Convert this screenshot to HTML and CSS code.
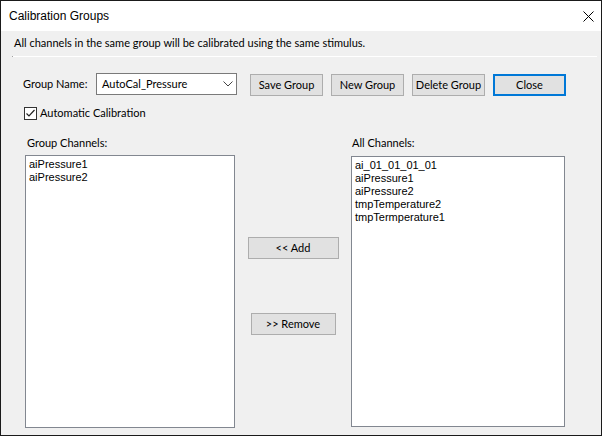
FILE: index.html
```html
<!DOCTYPE html>
<html>
<head>
<meta charset="utf-8">
<title>Calibration Groups</title>
<link rel="stylesheet" href="styles.css">
</head>
<body>
<div class="window">
  <div class="titlebar">
    <span class="title">Calibration Groups</span>
    <svg class="close-x" width="11" height="11" viewBox="0 0 11 11"><path d="M0.5 0.5 L10.5 10.5 M10.5 0.5 L0.5 10.5" stroke="#000" stroke-width="1" fill="none"/></svg>
  </div>
  <div class="content">
    <div class="desc">All channels in the same group will be calibrated using the same stimulus.</div>
    <div class="sep"></div>
    <div class="row1">
      <span class="lbl-name">Group Name:</span>
      <div class="combo">
        <span>AutoCal_Pressure</span>
        <svg class="chev" width="10" height="6" viewBox="0 0 10 6"><path d="M0.5 0.5 L5 5 L9.5 0.5" stroke="#444" stroke-width="1" fill="none"/></svg>
      </div>
      <div class="btns">
        <div class="btn">Save Group</div>
        <div class="btn">New Group</div>
        <div class="btn">Delete Group</div>
        <div class="btn btn-default">Close</div>
      </div>
    </div>
    <div class="row-check">
      <svg class="cb" width="13" height="13" viewBox="0 0 13 13"><rect x="0.5" y="0.5" width="12" height="12" fill="#fff" stroke="#333"/><path d="M2.5 6.5 L5 9 L10.5 3" stroke="#222" stroke-width="1.2" fill="none"/></svg>
      <span class="cb-label">Automatic Calibration</span>
    </div>
    <div class="lists">
      <div class="col-left">
        <div class="col-label">Group Channels:</div>
        <div class="listbox lb-left">
          <div>aiPressure1</div>
          <div>aiPressure2</div>
        </div>
      </div>
      <div class="col-mid">
        <div class="btn btn-add">&lt;&lt; Add</div>
        <div class="btn btn-remove">&gt;&gt; Remove</div>
      </div>
      <div class="col-right">
        <div class="col-label">All Channels:</div>
        <div class="listbox lb-right">
          <div>ai_01_01_01_01</div>
          <div>aiPressure1</div>
          <div>aiPressure2</div>
          <div>tmpTemperature2</div>
          <div>tmpTermperature1</div>
        </div>
      </div>
    </div>
  </div>
</div>
</body>
</html>
```
FILE: styles.css
```css
html, body {
  margin: 0;
  padding: 0;
  background: #ffffff;
}
body {
  font-family: Lato, "Liberation Sans", Arial, sans-serif;
  font-size: 11px;
  color: #000;
}
.window {
  width: 602px;
  height: 436px;
  box-sizing: border-box;
  border: 1px solid #1a1a1a;
  display: flex;
  flex-direction: column;
  overflow: hidden;
}
.titlebar {
  height: 30px;
  flex: 0 0 30px;
  background: #fff;
  display: flex;
  align-items: center;
  justify-content: space-between;
  padding: 0 7px 0 8px;
}
.title {
  font-family: "Liberation Sans", Arial, sans-serif;
  font-size: 12px;
  line-height: 15px;
  padding-top: 1px;
}
.close-x {
  display: block;
  margin-top: 1px;
}
.content {
  flex: 1;
  background: #f0f0f0;
  display: flex;
  flex-direction: column;
}
.desc {
  margin-top: 4px;
  padding-left: 13px;
  line-height: 15px;
  height: 16px;
  white-space: nowrap;
}
.sep {
  margin: 5px 4px 0 11px;
  height: 1px;
  background: #ffffff;
  border-left: 1px solid #a0a0a0;
}
.row1 {
  margin-top: 16px;
  display: flex;
  align-items: flex-start;
  height: 23px;
}
.lbl-name {
  margin-left: 22px;
  width: 73px;
  line-height: 15px;
  margin-top: 3px;
  white-space: nowrap;
}
.combo {
  width: 141px;
  height: 22px;
  box-sizing: border-box;
  border: 1px solid #7a7a7a;
  background: #fff;
  display: flex;
  align-items: center;
  justify-content: space-between;
  padding: 0 3px 1px 5px;
}
.chev {
  display: block;
  margin-top: 1px;
}
.btns {
  display: flex;
  gap: 8px;
  margin-left: 13px;
  margin-top: 1px;
}
.btn {
  height: 22px;
  box-sizing: border-box;
  border: 1px solid #adadad;
  background: #e1e1e1;
  display: flex;
  align-items: center;
  justify-content: center;
  width: 73px;
  line-height: 15px;
  padding-bottom: 2px;
  white-space: nowrap;
}
.btn-default {
  border: 2px solid #0078d7;
  padding-bottom: 1px;
}
.row-check {
  margin-top: 11px;
  display: flex;
  align-items: center;
  height: 13px;
  padding-left: 23px;
}
.cb {
  display: block;
}
.cb-label {
  margin-left: 3px;
  line-height: 15px;
  padding-bottom: 2px;
}
.lists {
  margin-top: 16px;
  display: flex;
  align-items: flex-start;
  padding-left: 24px;
}
.col-label {
  line-height: 13px;
  height: 15px;
  padding-left: 2px;
}
.col-left {
  width: 210px;
}
.listbox {
  box-sizing: border-box;
  border: 1px solid #828790;
  background: #fff;
  font-family: "Liberation Sans", Arial, sans-serif;
  font-size: 11px;
  line-height: 13px;
  padding: 2px 3px;
}
.lb-left {
  margin-top: 4px;
  width: 210px;
  height: 273px;
}
.col-mid {
  width: 116px;
  display: flex;
  flex-direction: column;
  align-items: center;
}
.btn-add {
  margin-top: 101px;
  width: 91px;
}
.btn-remove {
  margin-top: 54px;
  width: 85px;
}
.col-right {
  width: 214px;
}
.col-right .col-label {
  padding-left: 1px;
}
.lb-right {
  margin-top: 5px;
  width: 214px;
  height: 271px;
}
```
